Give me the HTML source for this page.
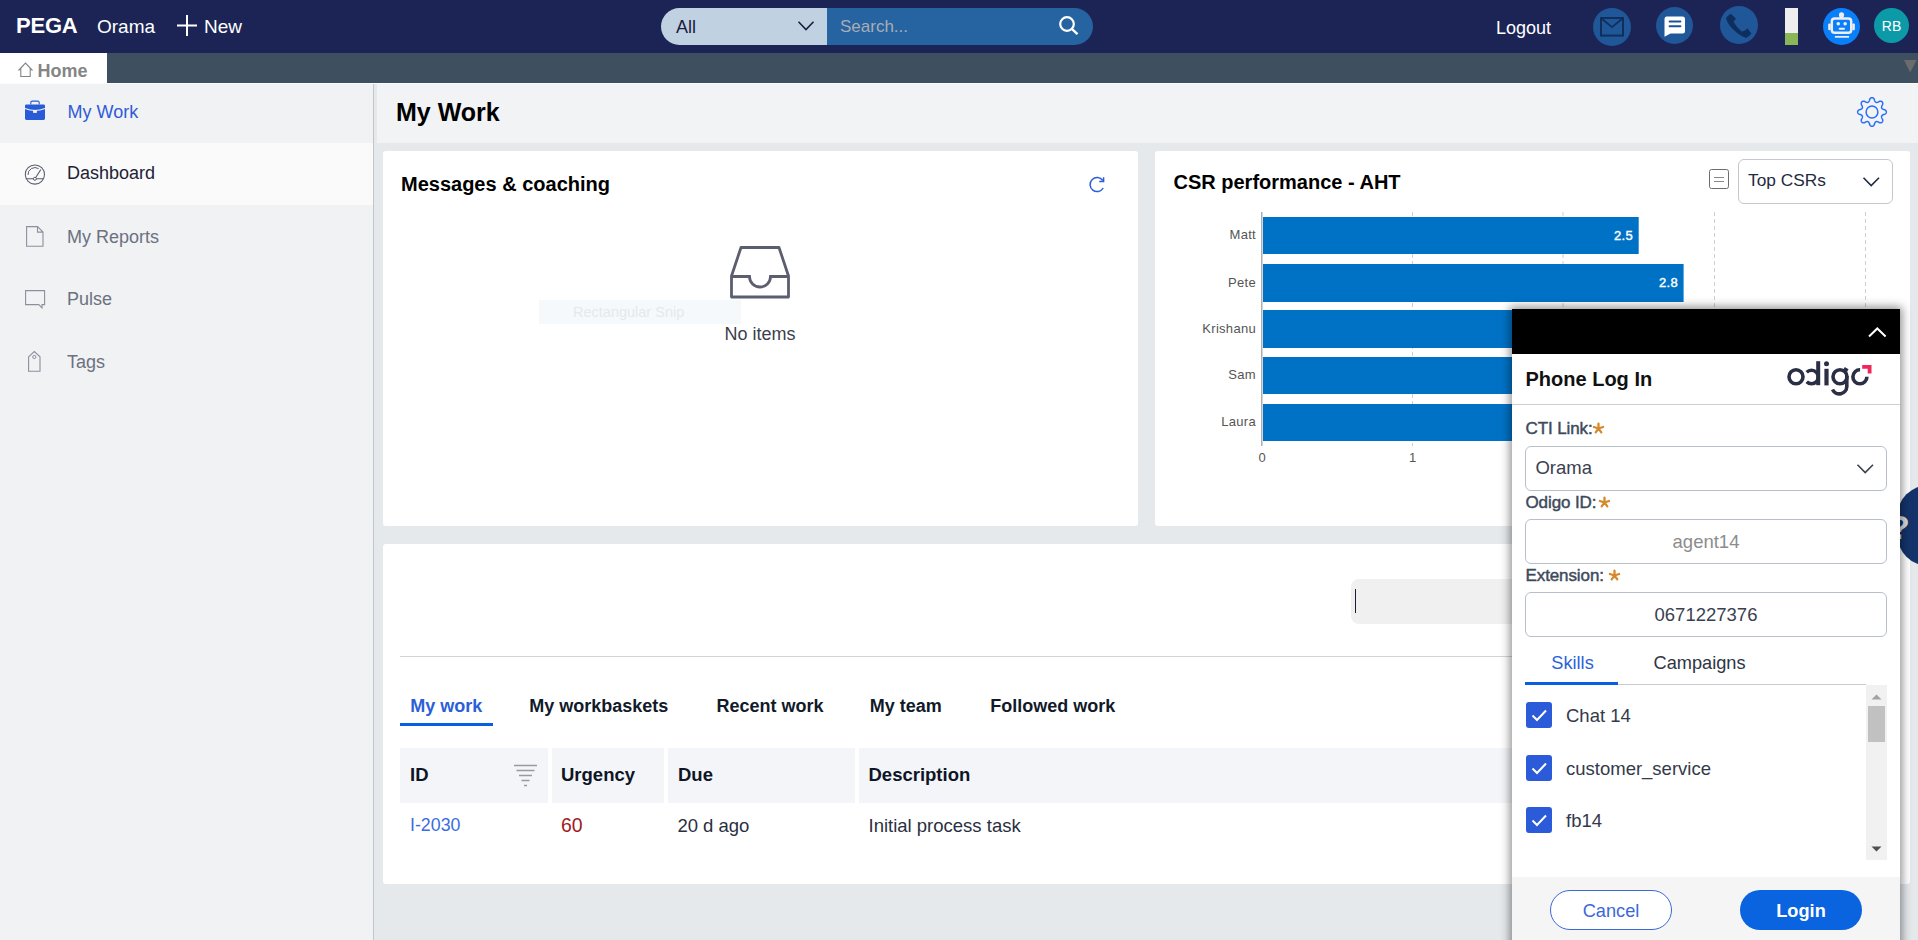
<!DOCTYPE html>
<html><head><meta charset="utf-8">
<style>
*{box-sizing:border-box;margin:0;padding:0}
html,body{width:1918px;height:940px;overflow:hidden;background:#e5e9ec;font-family:"Liberation Sans",sans-serif;position:relative}
.a{position:absolute}
.t{position:absolute;line-height:1;white-space:nowrap}
.b{font-weight:bold}
svg{position:absolute;overflow:visible}
</style></head><body>

<!-- HEADER -->
<div class="a" style="left:0;top:0;width:1918px;height:53px;background:#1c2456"></div>
<div class="t b" style="left:16px;top:14.6px;font-size:22px;color:#fff;letter-spacing:-0.2px">PEGA</div>
<div class="t" style="left:97px;top:17.2px;font-size:19px;color:#fff">Orama</div>
<svg style="left:177px;top:15px" width="20" height="21"><path d="M10 0V21M0 10.5H20" stroke="#fff" stroke-width="2"/></svg>
<div class="t" style="left:204px;top:17.2px;font-size:19px;color:#fff">New</div>

<div class="a" style="left:661px;top:8px;width:166px;height:37px;background:#c0d2e2;border-radius:18.5px 0 0 18.5px"></div>
<div class="t" style="left:676px;top:17.7px;font-size:18px;color:#1a2040">All</div>
<svg style="left:798px;top:21px" width="16" height="10"><path d="M0.5 0.8L8 8.5L15.5 0.8" fill="none" stroke="#1a2040" stroke-width="1.6"/></svg>
<div class="a" style="left:827px;top:8px;width:266px;height:37px;background:#2563a1;border-radius:0 18.5px 18.5px 0"></div>
<div class="t" style="left:840px;top:18px;font-size:17px;color:#a9adb6">Search...</div>
<svg style="left:1059px;top:16px" width="20" height="19"><circle cx="8" cy="8" r="6.8" fill="none" stroke="#fff" stroke-width="2.2"/><path d="M12.8 12.8L18.5 18.2" stroke="#fff" stroke-width="2.4"/></svg>

<div class="t" style="left:1496px;top:18.9px;font-size:18px;color:#fff">Logout</div>
<!-- mail -->
<div class="a" style="left:1593px;top:7.5px;width:38px;height:38px;border-radius:50%;background:#1f5799"></div>
<svg style="left:1600px;top:17px" width="24" height="20"><rect x="1" y="1" width="22" height="17.6" fill="none" stroke="#112f5c" stroke-width="2"/><path d="M1.5 1.5L12 10.2L22.5 1.5" fill="none" stroke="#112f5c" stroke-width="1.8"/></svg>
<!-- chat -->
<div class="a" style="left:1656px;top:6.5px;width:37px;height:37px;border-radius:50%;background:#1f5799"></div>
<svg style="left:1664px;top:15.5px" width="22" height="21"><path d="M2.5 0.5H18.5Q21 0.5 21 3V15Q21 17.5 18.5 17.5H6.5L0.5 20.8V3Q0.5 0.5 2.5 0.5Z" fill="#fff"/><path d="M5.6 5.4H16.4M5.6 10.2H16.4" stroke="#1b5296" stroke-width="2" stroke-linecap="round"/></svg>
<!-- phone -->
<div class="a" style="left:1720px;top:6px;width:38px;height:38px;border-radius:50%;background:#1f5799"></div>
<svg style="left:1715px;top:2px" width="40" height="42"><path d="M15.76 12.13 L20.61 16.57 L18.19 19.81 Q20.52 24.75 26.68 29.91 L30.32 28.70 L32.34 26.68 L35.97 31.53 Q33.95 34.76 30.72 35.57 Q23.25 32.84 16.17 25.06 Q11.13 18.59 11.72 15.36 Z" fill="#0e2f5e" stroke="#0e2f5e" stroke-width="0.8" stroke-linejoin="round"/></svg>
<!-- level bar -->
<div class="a" style="left:1785px;top:8px;width:13px;height:25px;background:#eeeeee"></div>
<div class="a" style="left:1785px;top:33px;width:13px;height:12px;background:#8ab657"></div>
<!-- bot -->
<div class="a" style="left:1823px;top:7.7px;width:37px;height:37px;border-radius:50%;background:#0a7ffa"></div>
<svg style="left:1715px;top:2px" width="160" height="48" viewBox="0 0 160 48">
<g transform="scale(0.08084)" fill="#eee">
<circle cx="1565" cy="160" r="32"/>
<rect x="1545" y="170" width="40" height="40"/>
<rect x="1445" y="205" width="240" height="175" rx="35" fill="none" stroke="#eee" stroke-width="30"/>
<rect x="1400" y="265" width="32" height="85" rx="12"/>
<rect x="1698" y="265" width="32" height="85" rx="12"/>
<circle cx="1525" cy="270" r="22"/><circle cx="1610" cy="270" r="22"/>
<rect x="1530" y="318" width="78" height="26" rx="13"/>
<rect x="1483" y="420" width="175" height="22"/>
</g></svg>
<!-- RB -->
<div class="a" style="left:1874px;top:8px;width:35px;height:35px;border-radius:50%;background:#0d9aa8"></div>
<div class="t" style="left:1874px;top:18.6px;width:35px;text-align:center;font-size:14px;color:#fff">RB</div>

<!-- TAB BAR -->
<div class="a" style="left:0;top:53px;width:1918px;height:30px;background:#3e5060"></div>
<div class="a" style="left:0;top:53px;width:107px;height:30px;background:#fff"></div>
<svg style="left:18px;top:62px" width="16" height="16"><path d="M0.5 8.5L7.5 1L14.5 8.5M2.8 6.2V14.5H12.2V6.2" fill="none" stroke="#858585" stroke-width="1.1"/></svg>
<div class="t b" style="left:37.5px;top:62.3px;font-size:18px;color:#858585">Home</div>
<svg style="left:1904px;top:60px" width="13" height="13"><path d="M0 0H12.5L6.25 12.5Z" fill="#6b6b6b"/></svg>
<div class="a" style="left:0;top:83px;width:1918px;height:1px;background:#fafbfc"></div>

<!-- SIDEBAR -->
<div class="a" style="left:0;top:84px;width:373px;height:856px;background:#f1f2f4"></div>
<div class="a" style="left:373px;top:84px;width:1px;height:856px;background:#c0c5ce"></div>
<div class="a" style="left:0;top:143px;width:373px;height:62px;background:#fafafa"></div>

<svg style="left:25px;top:100px" width="21" height="21"><path d="M5.8 4.5V2.6Q5.8 1.1 7.3 1.1H12.7Q14.2 1.1 14.2 2.6V4.5" fill="none" stroke="#2a5bd7" stroke-width="1.1"/><rect x="0" y="4.4" width="20" height="15.6" rx="1.4" fill="#2a5bd7"/><path d="M0 8.4Q10 12.6 20 8.4" fill="none" stroke="#f1f2f4" stroke-width="1.1"/><rect x="8.1" y="9.9" width="3.8" height="3" fill="#f1f2f4"/></svg>
<div class="t" style="left:67.5px;top:102.7px;font-size:18px;color:#2f5bd8">My Work</div>

<svg style="left:25px;top:163.5px" width="21" height="21"><circle cx="9.9" cy="10.5" r="9.6" fill="none" stroke="#5a5e6e" stroke-width="1.05"/><path d="M0.8 14.8H19M9.9 14.8L15.8 5.6" fill="none" stroke="#5a5e6e" stroke-width="1.05"/><path d="M3 11A7 7 0 0 1 13.6 4.6" fill="none" stroke="#5a5e6e" stroke-width="1"/><circle cx="9.9" cy="14.8" r="1.5" fill="#fafafa" stroke="#5a5e6e" stroke-width="1"/></svg>
<div class="t" style="left:67px;top:164.2px;font-size:18px;color:#1e2235">Dashboard</div>

<svg style="left:26px;top:226px" width="18" height="21"><path d="M0.6 0.6H11.5L17 6.1V20.2H0.6Z M11.5 0.6V6.1H17" fill="none" stroke="#8c909c" stroke-width="1.1"/></svg>
<div class="t" style="left:67px;top:227.7px;font-size:18px;color:#6b7180">My Reports</div>

<svg style="left:25px;top:290px" width="21" height="19"><path d="M0.6 0.6H19.6V14.6H17V17.8L13.8 14.6H0.6Z" fill="none" stroke="#8c909c" stroke-width="1.1"/></svg>
<div class="t" style="left:67px;top:289.7px;font-size:18px;color:#6b7180">Pulse</div>

<svg style="left:28px;top:351px" width="14" height="21"><path d="M0.6 5.8L6.3 0.6L12 5.8V20.2H0.6Z" fill="none" stroke="#8c909c" stroke-width="1.1"/><circle cx="6.3" cy="6" r="1.6" fill="none" stroke="#8c909c" stroke-width="1"/></svg>
<div class="t" style="left:67px;top:352.7px;font-size:18px;color:#6b7180">Tags</div>

<!-- MAIN TITLE -->
<div class="a" style="left:377px;top:84px;width:1541px;height:59px;background:#f2f3f5"></div>
<div class="t b" style="left:396px;top:99.6px;font-size:25px;color:#000">My Work</div>
<svg style="left:1856px;top:96px" width="32" height="32"><path d="M30.35 16.00 L30.31 16.37 L30.20 16.74 L30.02 17.10 L29.77 17.45 L29.44 17.77 L29.05 18.07 L28.54 18.33 L27.78 18.50 L27.27 18.71 L26.86 18.91 L26.51 19.11 L26.21 19.32 L25.97 19.53 L25.79 19.76 L25.65 20.00 L25.58 20.26 L25.55 20.55 L25.57 20.87 L25.63 21.23 L25.73 21.62 L25.88 22.06 L26.10 22.56 L26.51 23.23 L26.69 23.76 L26.76 24.25 L26.76 24.71 L26.69 25.13 L26.57 25.52 L26.39 25.86 L26.15 26.15 L25.86 26.39 L25.52 26.57 L25.13 26.69 L24.71 26.76 L24.25 26.76 L23.76 26.69 L23.23 26.51 L22.56 26.10 L22.06 25.88 L21.62 25.73 L21.23 25.63 L20.87 25.57 L20.55 25.55 L20.26 25.58 L20.00 25.65 L19.76 25.79 L19.53 25.97 L19.32 26.21 L19.11 26.51 L18.91 26.86 L18.71 27.27 L18.50 27.78 L18.33 28.54 L18.07 29.05 L17.77 29.44 L17.45 29.77 L17.10 30.02 L16.74 30.20 L16.37 30.31 L16.00 30.35 L15.63 30.31 L15.26 30.20 L14.90 30.02 L14.55 29.77 L14.23 29.44 L13.93 29.05 L13.67 28.54 L13.50 27.78 L13.29 27.27 L13.09 26.86 L12.89 26.51 L12.68 26.21 L12.47 25.97 L12.24 25.79 L12.00 25.65 L11.74 25.58 L11.45 25.55 L11.13 25.57 L10.77 25.63 L10.38 25.73 L9.94 25.88 L9.44 26.10 L8.77 26.51 L8.24 26.69 L7.75 26.76 L7.29 26.76 L6.87 26.69 L6.48 26.57 L6.14 26.39 L5.85 26.15 L5.61 25.86 L5.43 25.52 L5.31 25.13 L5.24 24.71 L5.24 24.25 L5.31 23.76 L5.49 23.23 L5.90 22.56 L6.12 22.06 L6.27 21.62 L6.37 21.23 L6.43 20.87 L6.45 20.55 L6.42 20.26 L6.35 20.00 L6.21 19.76 L6.03 19.53 L5.79 19.32 L5.49 19.11 L5.14 18.91 L4.73 18.71 L4.22 18.50 L3.46 18.33 L2.95 18.07 L2.56 17.77 L2.23 17.45 L1.98 17.10 L1.80 16.74 L1.69 16.37 L1.65 16.00 L1.69 15.63 L1.80 15.26 L1.98 14.90 L2.23 14.55 L2.56 14.23 L2.95 13.93 L3.46 13.67 L4.22 13.50 L4.73 13.29 L5.14 13.09 L5.49 12.89 L5.79 12.68 L6.03 12.47 L6.21 12.24 L6.35 12.00 L6.42 11.74 L6.45 11.45 L6.43 11.13 L6.37 10.77 L6.27 10.38 L6.12 9.94 L5.90 9.44 L5.49 8.77 L5.31 8.24 L5.24 7.75 L5.24 7.29 L5.31 6.87 L5.43 6.48 L5.61 6.14 L5.85 5.85 L6.14 5.61 L6.48 5.43 L6.87 5.31 L7.29 5.24 L7.75 5.24 L8.24 5.31 L8.77 5.49 L9.44 5.90 L9.94 6.12 L10.38 6.27 L10.77 6.37 L11.13 6.43 L11.45 6.45 L11.74 6.42 L12.00 6.35 L12.24 6.21 L12.47 6.03 L12.68 5.79 L12.89 5.49 L13.09 5.14 L13.29 4.73 L13.50 4.22 L13.67 3.46 L13.93 2.95 L14.23 2.56 L14.55 2.23 L14.90 1.98 L15.26 1.80 L15.63 1.69 L16.00 1.65 L16.37 1.69 L16.74 1.80 L17.10 1.98 L17.45 2.23 L17.77 2.56 L18.07 2.95 L18.33 3.46 L18.50 4.22 L18.71 4.73 L18.91 5.14 L19.11 5.49 L19.32 5.79 L19.53 6.03 L19.76 6.21 L20.00 6.35 L20.26 6.42 L20.55 6.45 L20.87 6.43 L21.23 6.37 L21.62 6.27 L22.06 6.12 L22.56 5.90 L23.23 5.49 L23.76 5.31 L24.25 5.24 L24.71 5.24 L25.13 5.31 L25.52 5.43 L25.86 5.61 L26.15 5.85 L26.39 6.14 L26.57 6.48 L26.69 6.87 L26.76 7.29 L26.76 7.75 L26.69 8.24 L26.51 8.77 L26.10 9.44 L25.88 9.94 L25.73 10.38 L25.63 10.77 L25.57 11.13 L25.55 11.45 L25.58 11.74 L25.65 12.00 L25.79 12.24 L25.97 12.47 L26.21 12.68 L26.51 12.89 L26.86 13.09 L27.27 13.29 L27.78 13.50 L28.54 13.67 L29.05 13.93 L29.44 14.23 L29.77 14.55 L30.02 14.90 L30.20 15.26 L30.31 15.63Z" fill="none" stroke="#2a6ef5" stroke-width="1.5" stroke-linejoin="round"/><circle cx="16" cy="16" r="5.9" fill="none" stroke="#2a6ef5" stroke-width="1.5"/></svg>

<!-- CARDS -->
<div class="a" style="left:383px;top:151px;width:755px;height:375px;background:#fff;border-radius:3px"></div>
<div class="a" style="left:1155px;top:151px;width:755px;height:375px;background:#fff;border-radius:3px"></div>
<div class="a" style="left:383px;top:544px;width:1527px;height:340px;background:#fff;border-radius:3px"></div>

<!--CARD1-->
<div class="t b" style="left:401px;top:174px;font-size:20px;color:#000">Messages &amp; coaching</div>
<svg style="left:1088px;top:176px" width="18" height="17"><path d="M14.8 4.5A7 7 0 1 0 15.2 12" fill="none" stroke="#2b5fd9" stroke-width="1.5"/><path d="M15.6 1.2V5.6H11.2" fill="none" stroke="#2b5fd9" stroke-width="1.5"/></svg>
<svg style="left:730px;top:246px" width="61" height="54"><path d="M1.5 51V30L11 1.5H49L58.5 30V51Z" fill="none" stroke="#5a5e6e" stroke-width="2.8" stroke-linejoin="round"/><path d="M1.5 30.5H19.5A10.5 10.5 0 0 0 40.5 30.5H58.5" fill="none" stroke="#5a5e6e" stroke-width="2.8"/></svg>
<div class="a" style="left:539px;top:300px;width:202px;height:24px;background:#f5f9fc"></div>
<div class="t" style="left:573px;top:304.8px;font-size:14.5px;color:#e6e8eb">Rectangular Snip</div>
<div class="t" style="left:724.4px;top:324.7px;font-size:18px;color:#3b3f4c">No items</div>
<!--CARD2-->
<div class="t b" style="left:1173.5px;top:172.4px;font-size:20px;color:#000">CSR performance - AHT</div>
<div class="a" style="left:1709px;top:169px;width:20px;height:20px;border:1.3px solid #6d6d6d;border-radius:2.5px"></div>
<div class="a" style="left:1714px;top:177px;width:10px;height:1.2px;background:#8a8a8a"></div>
<div class="a" style="left:1714px;top:180.5px;width:10px;height:1.2px;background:#8a8a8a"></div>
<div class="a" style="left:1738px;top:159px;width:155px;height:45px;border:1px solid #c3c7ce;border-radius:6px;background:#fff"></div>
<div class="t" style="left:1748px;top:172.3px;font-size:17.3px;color:#1f2a3f">Top CSRs</div>
<svg style="left:1863px;top:177px" width="17" height="10"><path d="M0.5 0.8L8.2 8.6L16 0.8" fill="none" stroke="#1f2a3f" stroke-width="1.6"/></svg>
<svg style="left:0;top:0" width="1918" height="940"><path d="M1412.5 212V446" stroke="#cfcfcf" stroke-width="1" stroke-dasharray="4 3"/><path d="M1563 212V446" stroke="#cfcfcf" stroke-width="1" stroke-dasharray="4 3"/><path d="M1714.5 212V446" stroke="#cfcfcf" stroke-width="1" stroke-dasharray="4 3"/><path d="M1865.5 212V446" stroke="#cfcfcf" stroke-width="1" stroke-dasharray="4 3"/><path d="M1261.8 212V446" stroke="#9a9a9a" stroke-width="1.2"/><rect x="1263" y="217" width="375.70000000000005" height="37" fill="#0072c6"/><rect x="1263" y="264" width="420.5999999999999" height="38" fill="#0072c6"/><rect x="1263" y="310" width="457" height="38" fill="#0072c6"/><rect x="1263" y="357" width="437" height="37" fill="#0072c6"/><rect x="1263" y="404" width="427" height="37" fill="#0072c6"/></svg>
<div class="t" style="left:1155px;width:101px;text-align:right;top:228.0px;font-size:13px;color:#555;letter-spacing:0.3px">Matt</div>
<div class="t" style="left:1155px;width:101px;text-align:right;top:275.5px;font-size:13px;color:#555;letter-spacing:0.3px">Pete</div>
<div class="t" style="left:1155px;width:101px;text-align:right;top:321.5px;font-size:13px;color:#555;letter-spacing:0.3px">Krishanu</div>
<div class="t" style="left:1155px;width:101px;text-align:right;top:368.0px;font-size:13px;color:#555;letter-spacing:0.3px">Sam</div>
<div class="t" style="left:1155px;width:101px;text-align:right;top:415.0px;font-size:13px;color:#555;letter-spacing:0.3px">Laura</div>
<div class="t" style="left:1633px;transform:translateX(-100%);top:229px;font-size:13px;color:#fff;letter-spacing:0.3px;-webkit-text-stroke:0.4px #fff">2.5</div>
<div class="t" style="left:1678px;transform:translateX(-100%);top:275.5px;font-size:13px;color:#fff;letter-spacing:0.3px;-webkit-text-stroke:0.4px #fff">2.8</div>
<div class="t" style="left:1262px;transform:translateX(-50%);top:451px;font-size:13px;color:#555">0</div>
<div class="t" style="left:1412.5px;transform:translateX(-50%);top:451px;font-size:13px;color:#555">1</div>
<!--CARD3-->
<div class="a" style="left:1351px;top:579px;width:250px;height:45px;background:#f0f0f0;border-radius:8px"></div>
<div class="a" style="left:1354.5px;top:589px;width:1.6px;height:24px;background:#1a1f36"></div>
<div class="a" style="left:400px;top:656px;width:1493px;height:1px;background:#d4d4d4"></div>
<div class="t b" style="left:410.2px;top:696.7px;font-size:18px;color:#2b5fd6">My work</div>
<div class="t b" style="left:529.3px;top:696.7px;font-size:18px;color:#111a2a">My workbaskets</div>
<div class="t b" style="left:716.5px;top:696.7px;font-size:18px;color:#111a2a">Recent work</div>
<div class="t b" style="left:869.8px;top:696.7px;font-size:18px;color:#111a2a">My team</div>
<div class="t b" style="left:990.2px;top:696.7px;font-size:18px;color:#111a2a">Followed work</div>
<div class="a" style="left:400px;top:723px;width:93px;height:3px;background:#0b5ee0"></div>
<div class="a" style="left:400px;top:748px;width:148px;height:55px;background:#f4f5f9"></div>
<div class="a" style="left:551.6px;top:748px;width:112.69999999999993px;height:55px;background:#f4f5f9"></div>
<div class="a" style="left:667.7px;top:748px;width:187.5px;height:55px;background:#f4f5f9"></div>
<div class="a" style="left:859px;top:748px;width:1034px;height:55px;background:#f4f5f9"></div>
<div class="t b" style="left:410px;top:766.3px;font-size:18.5px;color:#0e1526">ID</div>
<div class="t b" style="left:561px;top:766.3px;font-size:18.5px;color:#0e1526">Urgency</div>
<div class="t b" style="left:678px;top:766.3px;font-size:18.5px;color:#0e1526">Due</div>
<div class="t b" style="left:868.5px;top:766.3px;font-size:18.5px;color:#0e1526">Description</div>
<svg style="left:514px;top:764px" width="24" height="23"><path d="M0 1.5H23M2.5 6.5H20.5M5 11.5H18M7.5 16.5H15.5M10 21.5H13" stroke="#9a9a9a" stroke-width="1.3"/></svg>
<div class="t" style="left:410px;top:817.2px;font-size:17.8px;color:#3b6de0">I-2030</div>
<div class="t" style="left:561px;top:815.5px;font-size:19.5px;color:#a01a22">60</div>
<div class="t" style="left:677.4px;top:816.5px;font-size:18.5px;color:#2a2f3f">20 d ago</div>
<div class="t" style="left:868.5px;top:816.5px;font-size:18.5px;color:#2a2f3f">Initial process task</div>
<!--POPUP-->
<div class="a" style="left:1897px;top:484.5px;width:60px;height:81.5px;border-radius:32px 0 0 32px;background:#15336b"></div>
<div class="t b" style="left:1889px;top:510px;font-size:34px;color:#dcdcdc">?</div>
<div class="a" style="left:1512px;top:309px;width:388px;height:640px;background:#fff;box-shadow:0 0 9px 2px rgba(0,0,0,0.45)"></div>
<div class="a" style="left:1512px;top:309px;width:388px;height:45px;background:#000"></div>
<svg style="left:1868px;top:327px" width="19" height="11"><path d="M1 9.5L9.3 1.5L17.6 9.5" fill="none" stroke="#fff" stroke-width="2"/></svg>
<div class="t b" style="left:1525.5px;top:369.4px;font-size:20px;color:#111">Phone Log In</div>
<svg style="left:1786px;top:360px" width="90" height="38" viewBox="1786 360 90 38">
<circle cx="1796" cy="376.8" r="7" fill="none" stroke="#2b2f45" stroke-width="3.6"/>
<path d="M1806.7 372.2A6.8 6.8 0 1 1 1806.7 381.8" fill="none" stroke="#2b2f45" stroke-width="3.5"/>
<rect x="1816.2" y="361.2" width="4" height="24" fill="#2b2f45"/>
<rect x="1824.4" y="368.8" width="4.2" height="16.6" fill="#2b2f45"/>
<circle cx="1826.5" cy="363.7" r="2.5" fill="#2b2f45"/>
<circle cx="1840" cy="376.8" r="7" fill="none" stroke="#2b2f45" stroke-width="3.6"/>
<path d="M1846.8 376V386.5A7.5 7.5 0 0 1 1832.5 389.5" fill="none" stroke="#2b2f45" stroke-width="3.6"/>
<path d="M1844 368.5L1847.8 370.6" stroke="#2b2f45" stroke-width="3.2"/>
<path d="M1866.9 376.8A7 7 0 1 1 1860.1 369.8" fill="none" stroke="#2b2f45" stroke-width="3.6"/>
<path d="M1862.2 366.9H1869.6V373.5" fill="none" stroke="#f0265a" stroke-width="3.8"/>
</svg>
<div class="a" style="left:1512px;top:404px;width:388px;height:1px;background:#cfcfcf"></div>
<div class="t b" style="left:1525.5px;top:419.8px;font-size:17px;color:#3d4a5c;letter-spacing:-0.1px;-webkit-text-stroke:0.45px #3d4a5c;font-weight:normal">CTI Link:</div>
<svg style="left:1592.5px;top:423px" width="11" height="11"><path d="M5.50 5.50L5.50 0.70M5.50 5.50L10.07 4.02M5.50 5.50L8.32 9.38M5.50 5.50L2.68 9.38M5.50 5.50L0.93 4.02" stroke="#d48a2c" stroke-width="2.3" stroke-linecap="round"/></svg>
<div class="a" style="left:1525px;top:446px;width:362px;height:45px;border:1px solid #b9bfc9;border-radius:6px"></div>
<div class="t" style="left:1535.4px;top:458.6px;font-size:18.5px;color:#3a4050">Orama</div>
<svg style="left:1856.5px;top:463.5px" width="17" height="10"><path d="M0.5 0.8L8.2 8.6L16 0.8" fill="none" stroke="#3a4050" stroke-width="1.6"/></svg>
<div class="t b" style="left:1525.5px;top:493.5px;font-size:17px;color:#3d4a5c;letter-spacing:-0.1px;-webkit-text-stroke:0.45px #3d4a5c;font-weight:normal">Odigo ID:</div>
<svg style="left:1599px;top:497px" width="11" height="11"><path d="M5.50 5.50L5.50 0.70M5.50 5.50L10.07 4.02M5.50 5.50L8.32 9.38M5.50 5.50L2.68 9.38M5.50 5.50L0.93 4.02" stroke="#d48a2c" stroke-width="2.3" stroke-linecap="round"/></svg>
<div class="a" style="left:1525px;top:519px;width:362px;height:45px;border:1px solid #b9bfc9;border-radius:6px"></div>
<div class="t" style="left:1525px;width:362px;text-align:center;top:532.5px;font-size:18.5px;color:#8c8c8c">agent14</div>
<div class="t b" style="left:1525.5px;top:567.2px;font-size:17px;color:#3d4a5c;letter-spacing:-0.1px;-webkit-text-stroke:0.45px #3d4a5c;font-weight:normal">Extension:</div>
<svg style="left:1609px;top:570px" width="11" height="11"><path d="M5.50 5.50L5.50 0.70M5.50 5.50L10.07 4.02M5.50 5.50L8.32 9.38M5.50 5.50L2.68 9.38M5.50 5.50L0.93 4.02" stroke="#d48a2c" stroke-width="2.3" stroke-linecap="round"/></svg>
<div class="a" style="left:1525px;top:592px;width:362px;height:45px;border:1px solid #b9bfc9;border-radius:6px"></div>
<div class="t" style="left:1525px;width:362px;text-align:center;top:605.5px;font-size:18.5px;color:#3a4050">0671227376</div>
<div class="t" style="left:1551.3px;top:654.3px;font-size:18.2px;color:#2a63d9">Skills</div>
<div class="t" style="left:1653.5px;top:654.3px;font-size:18.2px;color:#2f3545">Campaigns</div>
<div class="a" style="left:1618px;top:684px;width:248px;height:1px;background:#c8ccd2"></div>
<div class="a" style="left:1525px;top:682px;width:93px;height:3px;background:#0b5ee0"></div>
<div class="a" style="left:1866px;top:685px;width:20.5px;height:175px;background:#f1f1f1"></div>
<svg style="left:1871px;top:693.5px" width="11" height="6"><path d="M0.5 5.5L5.5 0.5L10.5 5.5Z" fill="#a3a3a3"/></svg>
<div class="a" style="left:1868px;top:706px;width:17px;height:35.5px;background:#c1c1c1"></div>
<svg style="left:1871px;top:845.5px" width="11" height="6"><path d="M0.5 0.5L5.5 5.5L10.5 0.5Z" fill="#505050"/></svg>
<div class="a" style="left:1526px;top:702px;width:26px;height:26px;background:#2b5bd9;border-radius:3px"></div>
<svg style="left:1526px;top:702px" width="26" height="26"><path d="M6.5 13.5L11 18L20 8.5" fill="none" stroke="#fff" stroke-width="2"/></svg>
<div class="t" style="left:1566px;top:706.8px;font-size:18.5px;color:#333a4a">Chat 14</div>
<div class="a" style="left:1526px;top:755px;width:26px;height:26px;background:#2b5bd9;border-radius:3px"></div>
<svg style="left:1526px;top:755px" width="26" height="26"><path d="M6.5 13.5L11 18L20 8.5" fill="none" stroke="#fff" stroke-width="2"/></svg>
<div class="t" style="left:1566px;top:759.8px;font-size:18.5px;color:#333a4a">customer_service</div>
<div class="a" style="left:1526px;top:807px;width:26px;height:26px;background:#2b5bd9;border-radius:3px"></div>
<svg style="left:1526px;top:807px" width="26" height="26"><path d="M6.5 13.5L11 18L20 8.5" fill="none" stroke="#fff" stroke-width="2"/></svg>
<div class="t" style="left:1566px;top:811.8px;font-size:18.5px;color:#333a4a">fb14</div>
<div class="a" style="left:1512px;top:877px;width:388px;height:63px;background:#f5f5f5"></div>
<div class="a" style="left:1550px;top:890px;width:122px;height:40px;border:1px solid #3b68d8;border-radius:20px;background:#fff"></div>
<div class="t" style="left:1550px;width:122px;text-align:center;top:901.6px;font-size:18.2px;color:#3b68d8">Cancel</div>
<div class="a" style="left:1740px;top:890px;width:122px;height:40px;border-radius:20px;background:#0a64e0"></div>
<div class="t b" style="left:1740px;width:122px;text-align:center;top:901.6px;font-size:18.2px;color:#fff">Login</div>
</body></html>
